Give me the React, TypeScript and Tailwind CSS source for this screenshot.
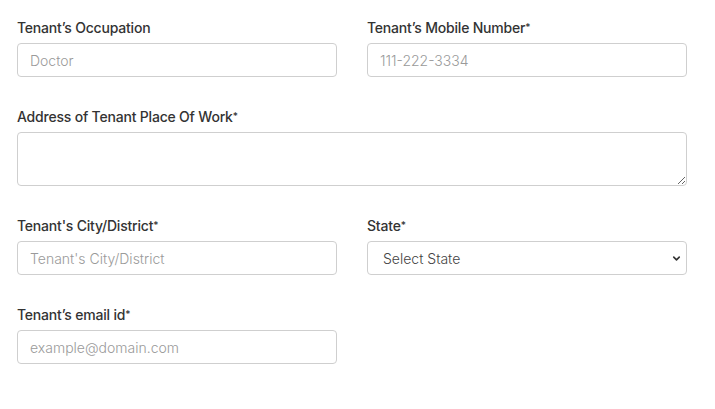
import { ChevronDown } from 'lucide-react'

const inputCls =
  'w-full h-[34px] border border-[#cfcfcf] rounded-[4px] px-3 text-[14px] font-light text-[#555] placeholder:text-[#9a9a9a] bg-white outline-none'

function Field({ label, req, children }: { label: string; req?: boolean; children: React.ReactNode }) {
  return (
    <div className="flex flex-col">
      <label className="text-[14px] leading-[20px] font-medium text-[#333] mb-[5px] tracking-[-0.2px]">
        {label}
        {req && <span className="text-[10px] align-top relative top-[-1px]">*</span>}
      </label>
      {children}
    </div>
  )
}

export default function App() {
  return (
    <div className="w-[715px] h-[409px] bg-white pt-[18px] px-[17px] font-['Inter',sans-serif]">
      <div className="grid grid-cols-2 gap-x-[30px] w-[670px] gap-y-[30px]">
        <Field label="Tenant’s Occupation">
          <input className={inputCls} placeholder="Doctor" />
        </Field>
        <Field label="Tenant’s Mobile Number" req>
          <input className={inputCls} placeholder="111-222-3334" />
        </Field>
        <div className="col-span-2">
          <Field label="Address of Tenant Place Of Work" req>
            <textarea className="w-full h-[54px] border border-[#cfcfcf] rounded-[4px] px-3 py-1 text-[14px] bg-white outline-none block" />
          </Field>
        </div>
        <Field label="Tenant's City/District" req>
          <input className={inputCls} placeholder="Tenant's City/District" />
        </Field>
        <Field label="State" req>
          <div className="relative">
            <select className="w-full h-[34px] border border-[#cfcfcf] rounded-[4px] pl-[15px] text-[14px] font-light text-[#444] bg-white outline-none appearance-none">
              <option>Select State</option>
            </select>
            <ChevronDown className="absolute right-[5px] top-[12px] size-[11px] text-[#333] pointer-events-none" strokeWidth={3.5} />
          </div>
        </Field>
        <Field label="Tenant’s email id" req>
          <input className={inputCls} placeholder="example@domain.com" />
        </Field>
      </div>
    </div>
  )
}
